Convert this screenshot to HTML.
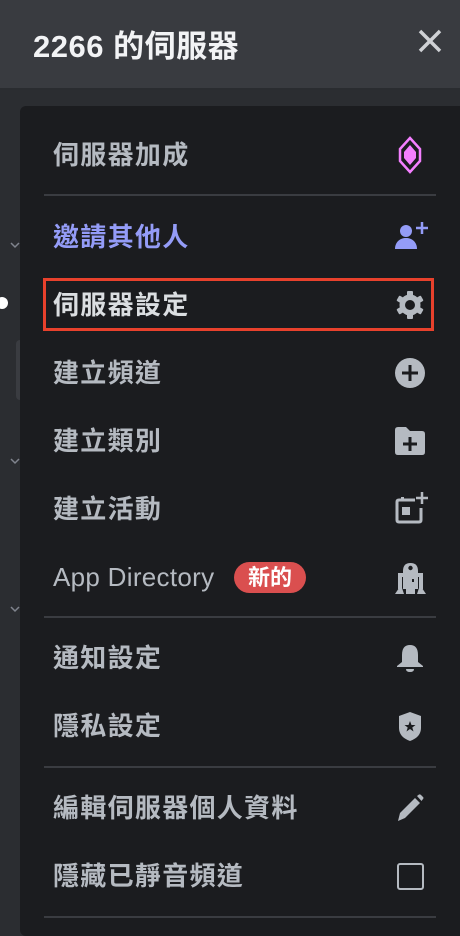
<!DOCTYPE html>
<html><head><meta charset="utf-8"><style>
*{margin:0;padding:0;box-sizing:border-box}
body{width:460px;height:920px;overflow:hidden;background:#2b2d31;font-family:"Liberation Sans","Noto Sans CJK TC",sans-serif;position:relative}
.hdr{position:absolute;left:0;top:0;width:460px;height:90px;background:#393b40;border-bottom:2px solid #2a2c30}
.title{position:absolute;left:33px;top:21px;font-size:31px;font-weight:bold;color:#f2f3f5;letter-spacing:0.5px}
.panel{position:absolute;left:20px;top:106px;width:460px;height:830px;background:#1b1c1f;border-radius:6px}
.row{position:absolute;left:53px;font-size:26px;letter-spacing:1.3px;color:#b5bac1;font-weight:bold;line-height:34px}
.sep{position:absolute;left:44px;width:392px;height:2px;background:#3a3c41}
.ic{position:absolute}
.chev{position:absolute;left:10px;width:10px;height:10px}
</style></head><body>
<div class="hdr"><div class="title">2266 的伺服器</div>
<svg class="ic" style="left:417px;top:28px" width="26" height="26" viewBox="0 0 26 26"><path d="M3 3L23 23M23 3L3 23" stroke="#cfd1d5" stroke-width="3.5" stroke-linecap="butt"/></svg></div>
<svg class="chev" style="top:240px" viewBox="0 0 10 10"><path d="M1 3L5 7L9 3" stroke="#80848e" stroke-width="1.5" fill="none"/></svg>
<svg class="chev" style="top:456px" viewBox="0 0 10 10"><path d="M1 3L5 7L9 3" stroke="#80848e" stroke-width="1.5" fill="none"/></svg>
<svg class="chev" style="top:604px" viewBox="0 0 10 10"><path d="M1 3L5 7L9 3" stroke="#80848e" stroke-width="1.5" fill="none"/></svg>
<div style="position:absolute;left:-4px;top:297px;width:12px;height:12px;border-radius:50%;background:#fff"></div>
<div style="position:absolute;left:16px;top:340px;width:8px;height:60px;border-radius:4px;background:#3a3c41"></div>
<div class="panel"></div>

<div class="row" style="top:138px">伺服器加成</div>
<svg class="ic" style="left:398px;top:136px" width="24" height="38" viewBox="0 0 24 38"><path d="M12 2L22 13V25L12 36L2 25V13Z" fill="none" stroke="#f47fff" stroke-width="2.5"/><path d="M12 9L18 16V22L12 29L6 22V16Z" fill="#f47fff"/></svg>
<div class="sep" style="top:194px"></div>

<div class="row" style="top:220px;color:#949cf7">邀請其他人</div>
<svg class="ic" style="left:394px;top:220px" width="36" height="30" viewBox="0 0 36 30"><circle cx="12" cy="11" r="6" fill="#949cf7"/><path d="M1 29C1 22 6 18 12 18C18 18 23 22 23 29Z" fill="#949cf7"/><path d="M28 2V14M22 8H34" stroke="#949cf7" stroke-width="2.5"/></svg>

<div style="position:absolute;left:43px;top:278px;width:391px;height:53px;border:3px solid #e8412c"></div>
<div class="row" style="top:288px;color:#dbdee1">伺服器設定</div>
<svg class="ic" style="left:395px;top:290px" width="30" height="30" viewBox="0 0 30 30"><g fill="#b5bac1"><circle cx="15" cy="15" r="10.5"/><rect x="12" y="1" width="6" height="28" rx="1"/><rect x="12" y="1" width="6" height="28" rx="1" transform="rotate(60 15 15)"/><rect x="12" y="1" width="6" height="28" rx="1" transform="rotate(120 15 15)"/></g><circle cx="15" cy="15" r="5" fill="#1b1c1f"/></svg>

<div class="row" style="top:356px">建立頻道</div>
<svg class="ic" style="left:395px;top:358px" width="30" height="30" viewBox="0 0 30 30"><circle cx="15" cy="15" r="15" fill="#b5bac1"/><path d="M15 7V23M7 15H23" stroke="#1b1c1f" stroke-width="3"/></svg>

<div class="row" style="top:424px">建立類別</div>
<svg class="ic" style="left:395px;top:427px" width="30" height="28" viewBox="0 0 30 28"><path d="M0 3Q0 0 3 0H11L15 4H27Q30 4 30 7V25Q30 28 27 28H3Q0 28 0 25Z" fill="#b5bac1"/><path d="M15 10V24M8 17H22" stroke="#1b1c1f" stroke-width="3"/></svg>

<div class="row" style="top:492px">建立活動</div>
<svg class="ic" style="left:395px;top:491px" width="34" height="34" viewBox="0 0 34 34"><path d="M20 9H4Q2 9 2 11V29Q2 31 4 31H24Q26 31 26 29V17" fill="none" stroke="#b5bac1" stroke-width="3"/><rect x="6" y="6" width="3" height="4" fill="#b5bac1"/><rect x="7" y="16" width="8" height="8" fill="#b5bac1"/><path d="M27 1V13M21 7H33" stroke="#b5bac1" stroke-width="2.5"/></svg>

<div class="row" style="top:560px;letter-spacing:0.3px;font-weight:normal">App Directory</div>
<div style="position:absolute;left:234px;top:562px;width:72px;height:31px;border-radius:16px;background:#da4f4f;color:#fff;font-size:22px;font-weight:bold;text-align:center;line-height:31px">新的</div>
<svg class="ic" style="left:394px;top:561px" width="33" height="34" viewBox="0 0 33 34"><g fill="#b5bac1"><path d="M9 10Q9 2 16.5 2Q24 2 24 10V28H9Z"/><rect x="4" y="12" width="25" height="4"/><rect x="4" y="12" width="4" height="16"/><rect x="25" y="12" width="4" height="16"/><path d="M1 33L5 27H8L10 33Z"/><path d="M32 33L28 27H25L23 33Z"/><rect x="12" y="28" width="9" height="5"/></g><circle cx="16.5" cy="7" r="2.2" fill="#1b1c1f"/><rect x="18" y="18" width="2" height="3" fill="#1b1c1f"/></svg>
<div class="sep" style="top:616px"></div>

<div class="row" style="top:641px">通知設定</div>
<svg class="ic" style="left:396px;top:644px" width="28" height="28" viewBox="0 0 28 28"><path d="M14 1Q22 1 22 11V18L27 22V23H1V22L6 18V11Q6 1 14 1Z" fill="#b5bac1"/><path d="M10 25H18Q18 28 14 28Q10 28 10 25Z" fill="#b5bac1"/></svg>

<div class="row" style="top:709px">隱私設定</div>
<svg class="ic" style="left:398px;top:711px" width="24" height="31" viewBox="0 0 24 31"><path d="M12 1L23 5V17Q23 26 12 30Q1 26 1 17V5Z" fill="#b5bac1"/><path d="M12 10L13.5 14H17.5L14.3 16.5L15.5 20.5L12 18L8.5 20.5L9.7 16.5L6.5 14H10.5Z" fill="#1b1c1f"/></svg>
<div class="sep" style="top:766px"></div>

<div class="row" style="top:791px">編輯伺服器個人資料</div>
<svg class="ic" style="left:396px;top:794px" width="28" height="28" viewBox="0 0 28 28"><path d="M2 27L4 19L19 4L24 9L9 24Z" fill="#b5bac1"/><path d="M21 2L23 0.5Q24 0 25 1L27 3Q28 4 27 5L25.5 7Z" fill="#b5bac1"/></svg>

<div class="row" style="top:859px">隱藏已靜音頻道</div>
<div style="position:absolute;left:397px;top:863px;width:27px;height:27px;border:2.5px solid #b5bac1;border-radius:3px"></div>
<div class="sep" style="top:916px"></div>
</body></html>
